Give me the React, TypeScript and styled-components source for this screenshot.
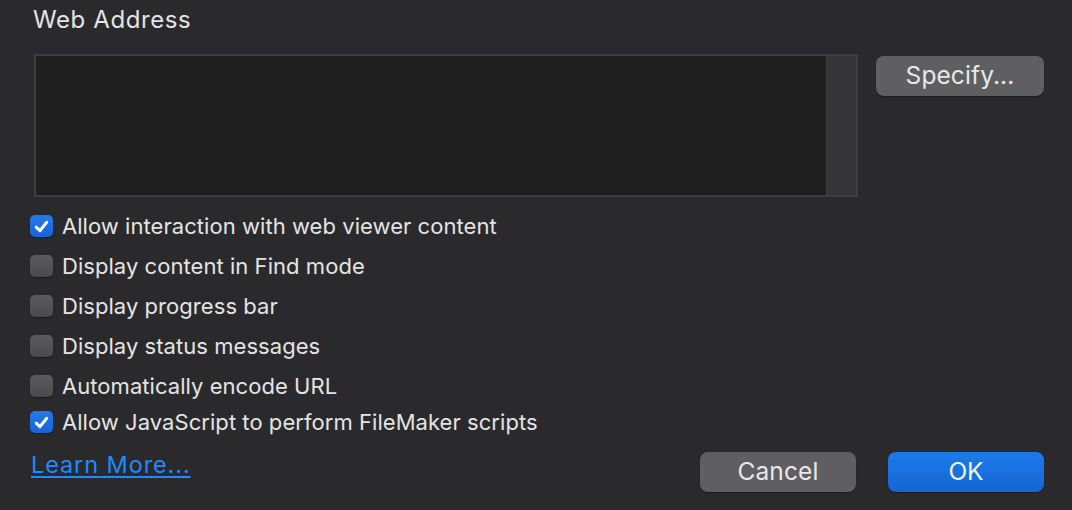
import React from "react";
import styled, { createGlobalStyle } from "styled-components";

const GlobalStyle = createGlobalStyle`
  html, body {
    margin: 0;
    padding: 0;
    background: #2a2a2c;
  }
  body {
    font-family: Inter, "Noto Sans", "Liberation Sans", sans-serif;
    color: #e6e6e6;
  }
`;

const options = [
  { label: "Allow interaction with web viewer content", checked: true },
  { label: "Display content in Find mode", checked: false },
  { label: "Display progress bar", checked: false },
  { label: "Display status messages", checked: false },
  { label: "Automatically encode URL", checked: false },
  { label: "Allow JavaScript to perform FileMaker scripts", checked: true },
];

const App: React.FC = () => {
  return (
    <>
      <GlobalStyle />
      <Dialog>
        <Title>Web Address</Title>
        <TopRow>
          <AddressBox>
            <AddressInput />
            <ScrollTrack />
          </AddressBox>
          <GrayButton $width={168}>Specify...</GrayButton>
        </TopRow>

        <OptionList>
          {options.map((o, i) => (
            <OptionRow key={o.label} $last={i === options.length - 1}>
              <CheckBox $checked={o.checked}>
                {o.checked && (
                  <svg width="17" height="17" viewBox="0 0 16 16">
                    <path
                      d="M3 8.6 L6.5 12 L12.9 4"
                      fill="none"
                      stroke="#ffffff"
                      strokeWidth="2.8"
                      strokeLinecap="round"
                      strokeLinejoin="round"
                    />
                  </svg>
                )}
              </CheckBox>
              <OptionLabel>{o.label}</OptionLabel>
            </OptionRow>
          ))}
        </OptionList>

        <Footer>
          <LearnMore href="#">Learn More...</LearnMore>
          <ButtonGroup>
            <GrayButton $width={156}>Cancel</GrayButton>
            <BlueButton>OK</BlueButton>
          </ButtonGroup>
        </Footer>
      </Dialog>
    </>
  );
};

const Dialog = styled.div`
  width: 1072px;
  height: 510px;
  box-sizing: border-box;
  padding: 5px 28px 0 30px;
  display: flex;
  flex-direction: column;
`;

const Title = styled.div`
  margin-left: 3px;
  font-size: 24px;
  letter-spacing: 0.6px;
  line-height: 30px;
  color: #e4e4e4;
`;

const TopRow = styled.div`
  display: flex;
  align-items: flex-start;
  gap: 18px;
  margin-top: 19px;
  margin-left: 4px;
`;

const AddressBox = styled.div`
  width: 824px;
  height: 143px;
  box-sizing: border-box;
  border: 2px solid #3e3e40;
  display: flex;
`;

const AddressInput = styled.div`
  flex: 1;
  background: #1e1e1e;
`;

const ScrollTrack = styled.div`
  width: 29px;
  background: #353537;
  border-left: 1px solid #3e3e40;
`;

const GrayButton = styled.div<{ $width: number }>`
  width: ${(p) => p.$width}px;
  height: 40px;
  box-sizing: border-box;
  padding-bottom: 3px;
  margin-top: 2px;
  border-radius: 8px;
  background: #5f5f61;
  box-shadow: 0 1px 1px rgba(0, 0, 0, 0.35);
  display: flex;
  align-items: center;
  justify-content: center;
  font-size: 24.5px;
  letter-spacing: 0.1px;
  color: #e8e8e8;
`;

const BlueButton = styled.div`
  width: 156px;
  height: 40px;
  box-sizing: border-box;
  padding-bottom: 3px;
  margin-top: 2px;
  border-radius: 8px;
  background: linear-gradient(#1c7be9, #1466d2);
  box-shadow: 0 1px 1px rgba(0, 0, 0, 0.35);
  display: flex;
  align-items: center;
  justify-content: center;
  font-size: 24.5px;
  color: #f2f2f2;
`;

const OptionList = styled.div`
  display: flex;
  flex-direction: column;
  margin-top: 9px;
`;

const OptionRow = styled.div<{ $last: boolean }>`
  display: flex;
  align-items: center;
  height: ${(p) => (p.$last ? 32 : 40)}px;
`;

const CheckBox = styled.div<{ $checked: boolean }>`
  width: 23px;
  height: 22px;
  box-sizing: border-box;
  border-radius: 5px;
  display: flex;
  align-items: center;
  justify-content: center;
  background: ${(p) =>
    p.$checked
      ? "linear-gradient(#2379ec, #1862d6)"
      : "linear-gradient(#5c5c5e, #4b4b4d)"};
  box-shadow: 0 1px 1px rgba(0, 0, 0, 0.4);
`;

const OptionLabel = styled.span`
  margin-left: 9px;
  font-size: 22px;
  letter-spacing: 0.05px;
  color: #e4e4e4;
`;

const Footer = styled.div`
  display: flex;
  justify-content: space-between;
  align-items: flex-start;
  margin-top: 12px;
`;

const LearnMore = styled.a`
  margin-left: 1px;
  margin-top: 0;
  font-size: 23.5px;
  letter-spacing: 0.9px;
  color: #1a8cff;
  text-decoration: underline;
  text-decoration-thickness: 2px;
  text-underline-offset: 3px;
`;

const ButtonGroup = styled.div`
  display: flex;
  gap: 32px;
`;

export default App;
